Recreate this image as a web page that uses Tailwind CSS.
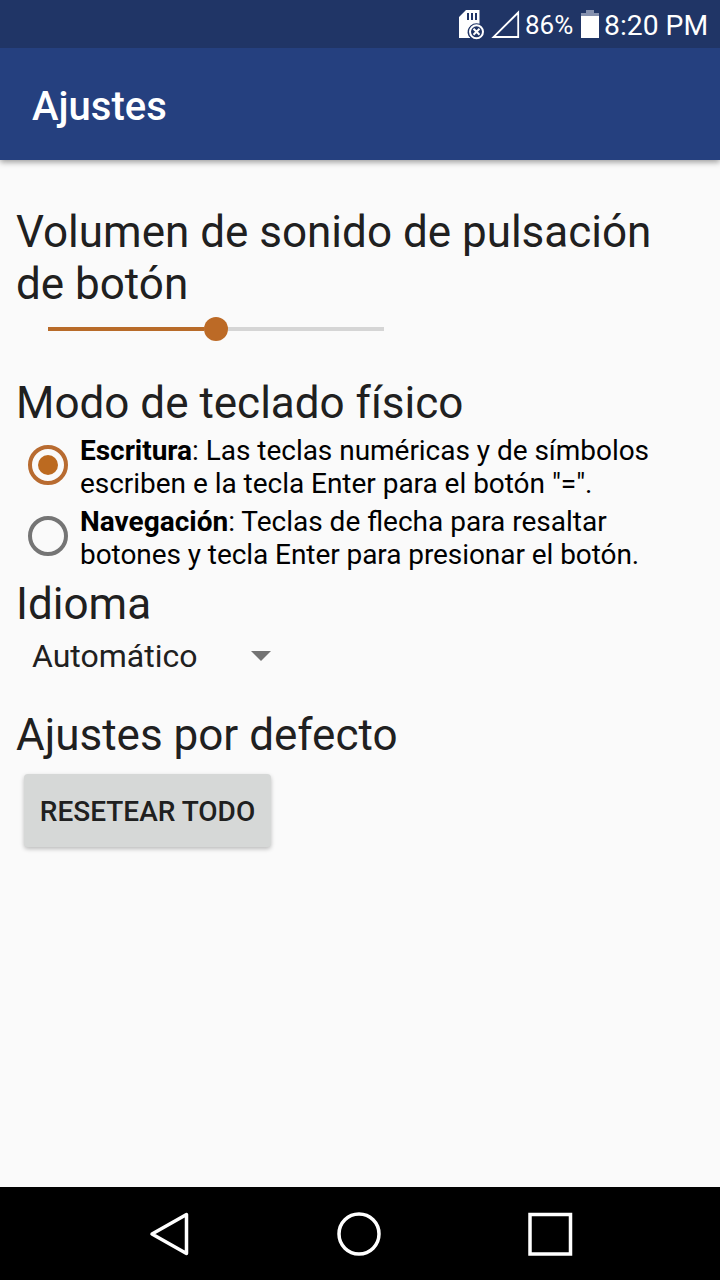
<!DOCTYPE html>
<html lang="es">
<head>
    <meta charset="UTF-8">
    <meta name="viewport" content="width=device-width, initial-scale=1.0">
    <title>Ajustes</title>
    <script src="https://cdn.jsdelivr.net/npm/@tailwindcss/browser@4"></script>
</head>
<body class="flex flex-col w-[720px] h-[1280px] overflow-hidden bg-[#fafafa] text-[#202020] font-[Roboto,sans-serif]">
    <!-- Barra de estado -->
    <div class="relative z-10 flex items-center h-12 shrink-0 bg-[#203566] text-white">
        <svg class="ml-[458px] shrink-0" width="28" height="48" viewBox="0 0 28 48">
            <path d="M8 10H21.500V26A7.500 7.500 0 0 0 12.500 38H1V17z" fill="#fff"/>
            <path d="M10 13V20M14 13V20M18 13V20" stroke="#203566" stroke-width="2"/>
            <circle cx="18.500" cy="31.800" r="8.500" fill="#203566"/>
            <circle cx="18.500" cy="31.800" r="6.500" fill="none" stroke="#fff" stroke-width="2"/>
            <path d="M15.500 28.800l6 6M21.500 28.800l-6 6" stroke="#fff" stroke-width="2"/>
        </svg>
        <svg class="ml-[5px] shrink-0" width="30" height="48" viewBox="0 0 30 48">
            <path d="M2.500 37H27.200V12.500z" fill="none" stroke="#fff" stroke-width="1.800"/>
        </svg>
        <span class="ml-1 w-[50px] mt-0.5 text-[26px] leading-8 whitespace-nowrap">86%</span>
        <svg class="ml-[5px] shrink-0" width="20" height="48" viewBox="0 0 20 48">
            <path d="M6 10h8v3h5v3H1v-3h5z" fill="#8490ae"/>
            <path d="M1 16h18v22H1z" fill="#fff"/>
        </svg>
        <span class="ml-1 mt-[3px] text-[28.300px] leading-8 whitespace-nowrap">8:20 PM</span>
    </div>

    <header class="flex items-center h-28 shrink-0 px-8 bg-[#25407f] text-white shadow-[0_2px_6px_rgba(0,0,0,0.4)]">
        <h1 class="mt-1 text-[40px] leading-[47px] font-medium">Ajustes</h1>
    </header>

    <main class="flex flex-col flex-1 px-4 pt-[46px]">
        <h2 class="text-[44px] leading-[52px]">Volumen de sonido de pulsación<br>de botón</h2>
        <div class="flex items-center w-[336px] h-9 ml-8 mt-[1px]">
            <div class="w-[156px] h-1 bg-[#b86b29]"></div>
            <div class="size-6 rounded-full bg-[#bc6a26]"></div>
            <div class="flex-1 h-1 bg-[#d5d5d5]"></div>
        </div>

        <h2 class="mt-[30px] text-[44px] leading-[52px]">Modo de teclado físico</h2>
        <label class="flex items-center h-[71px] mt-1 pl-3 text-[28px] leading-[33px] text-black">
            <span class="flex items-center justify-center size-10 mr-3 mb-[7px] shrink-0 rounded-full border-4 border-[#b86b30]">
                <span class="size-5 rounded-full bg-[#bc6a20]"></span>
            </span>
            <span class="mb-1 whitespace-nowrap tracking-[-0.030px]"><b>Escritura</b>: Las teclas numéricas y de símbolos<br>escriben e la tecla Enter para el botón "=".</span>
        </label>
        <label class="flex items-center h-[71px] pl-3 text-[28px] leading-[33px] text-black">
            <span class="size-10 mr-3 mb-[7px] shrink-0 rounded-full border-4 border-[#757575]"></span>
            <span class="mb-1 whitespace-nowrap"><b>Navegación</b>: Teclas de flecha para resaltar<br><span class="tracking-[-0.065px]">botones y tecla Enter para presionar el botón.</span></span>
        </label>

        <h2 class="mt-[3px] text-[44px] leading-[52px]">Idioma</h2>
        <div class="flex items-center justify-between w-[255px] h-[52px] pl-4">
            <span class="text-[32px] leading-[38px]">Automático</span>
            <svg width="20" height="10" viewBox="0 0 20 10">
                <path d="M0 0h20L10 10z" fill="#737373"/>
            </svg>
        </div>

        <h2 class="mt-[27px] text-[44px] leading-[52px]">Ajustes por defecto</h2>
        <button class="w-[247px] h-[73px] ml-2 mt-[13px] pt-0.5 rounded-[4px] bg-[#d6d8d7] text-[28px] leading-[33px] font-medium whitespace-nowrap shadow-[0_2px_4px_rgba(0,0,0,0.25)]">RESETEAR TODO</button>
    </main>

    <!-- Barra de navegación -->
    <nav class="h-[93px] shrink-0 bg-black">
        <svg width="720" height="93" viewBox="0 0 720 93" fill="none" stroke="#fff" stroke-width="3.500">
            <path d="M152 47L186.500 27.500V66.500z" stroke-linejoin="round"/>
            <circle cx="359" cy="47" r="20"/>
            <path d="M530 27.500h40.500V67H530z"/>
        </svg>
    </nav>
</body>
</html>
